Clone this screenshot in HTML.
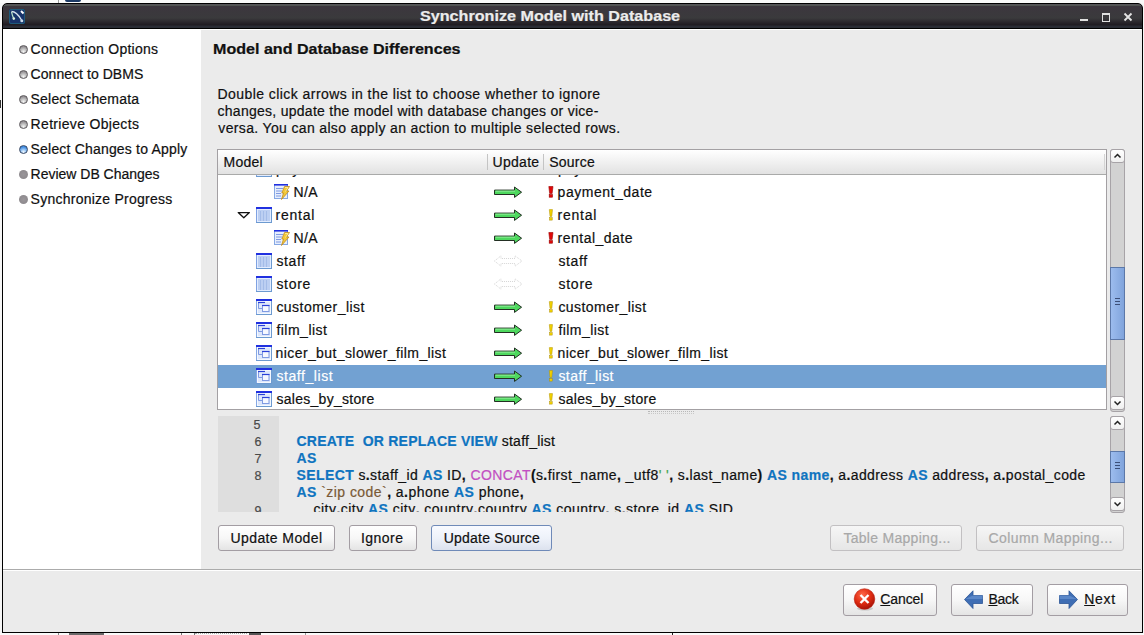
<!DOCTYPE html>
<html><head><meta charset="utf-8"><title>Synchronize Model with Database</title>
<style>
html,body{margin:0;padding:0;}
body{width:1144px;height:635px;position:relative;overflow:hidden;background:#f6f6f6;font-family:'Liberation Sans', sans-serif;}
.abs{position:absolute;}
.t{position:absolute;white-space:pre;-webkit-text-stroke:0.2px currentColor}
#bgtop{position:absolute;left:0;top:0;width:1144px;height:3px;background:#fafafa}
#win{position:absolute;left:2px;top:20px;width:1139px;height:612px;border:1px solid #000;border-top:0;background:#ececec}
#title{position:absolute;box-sizing:border-box;left:2px;top:3px;width:1141px;height:26px;border:1px solid #000;border-radius:5px 5px 0 0;background:linear-gradient(#58525c 0px,#4e564e 2px,#3c363e 2px,#3a3a3c 14px,#2f2c31 17px,#1f1b21 21px,#2a2c34 22px,#2a2c34 24px)}
#leftp{position:absolute;left:3px;top:29px;width:198px;height:540px;background:#fff}
#rightp{position:absolute;left:201px;top:29px;width:940px;height:540px;background:#ebebeb;border-top:1px solid #fff;box-sizing:border-box}
#sep{position:absolute;left:3px;top:569px;width:1138px;height:1px;background:#ababab;border-bottom:1px solid #fff}
#bottomp{position:absolute;left:3px;top:571px;width:1139px;height:61px;background:#ebebeb}
.bul{position:absolute;box-sizing:border-box;width:9px;height:9px;border-radius:50%;border:1px solid #5e5a5e;background:radial-gradient(circle at 50% 80%,#f4f4f4 0%,#c8c8c8 35%,#8e8a8e 80%)}
.bul.flat{border:0;background:radial-gradient(circle at 50% 50%,#9a969a 0%,#8e8a8e 70%,#9c9c9c 100%)}
.bul.blue{border-color:#3a4a66;background:radial-gradient(circle at 50% 85%,#f4faff 0%,#a8d0f8 30%,#3a88e0 75%)}
#list{position:absolute;left:217px;top:149px;width:888px;height:259px;border:1px solid #a3a0a3;background:#fff}
#lhead{position:absolute;left:218px;top:150px;width:888px;height:24px;border-bottom:1px solid #a9aaa9;background:linear-gradient(#ffffff,#e2e2e2)}
.bang{font-weight:bold;font-size:15px;line-height:16px}
.sbtrough{position:absolute;width:13px;border:1px solid #a7a3a7;border-radius:3px;background:#d2d2d2}
.sbbtn{position:absolute;width:13px;height:12px;border:1px solid #a7a3a7;border-radius:3px;background:linear-gradient(#ffffff,#f0f0f0);}
.sbbtn svg{position:absolute;left:-1px;top:-1px}
.sbslider{position:absolute;width:13px;border:1px solid #5c78a8;background:linear-gradient(90deg,#9cbcee,#80a4dc)}
.btn{position:absolute;box-sizing:border-box;border:1px solid #a39da3;border-radius:3px;background:linear-gradient(#ffffff 0%,#f7f7f7 50%,#e4e4e4 100%)}
.btn.focus{border-color:#6f8ab8;background:linear-gradient(#f8faff 0%,#eef2fa 50%,#dce2ee 100%)}
.btn.dis{border-color:#c2c0c2;background:linear-gradient(#f6f6f6,#e6e6e6)}
</style></head>
<body>
<div id="bgtop"></div>
<div class="abs" style="left:58px;top:0;width:1px;height:3px;background:#9a9a9a"></div>
<div class="abs" style="left:65px;top:0;width:16px;height:2px;background:#1d3a66;border-radius:0 0 4px 4px"></div>
<div class="abs" style="left:0;top:633px;width:1144px;height:2px;background:#fafafa"></div>
<div class="abs" style="left:58px;top:633px;width:1px;height:2px;background:#888"></div>
<div class="abs" style="left:181px;top:633px;width:1px;height:2px;background:#777"></div>
<div class="abs" style="left:194px;top:633px;width:1px;height:2px;background:#777"></div>
<div class="abs" style="left:305px;top:633px;width:1px;height:2px;background:#999"></div>
<div class="abs" style="left:672px;top:633px;width:1px;height:2px;background:#222"></div>
<div class="abs" style="left:69px;top:633px;width:35px;height:2px;background:#6a6a6a"></div>
<div class="abs" style="left:249px;top:633px;width:12px;height:2px;background:#555"></div>
<div class="abs" style="left:195px;top:633px;width:52px;height:1px;border-top:1px dotted #aaa"></div>
<div id="win"></div>
<div id="title"></div>
<div id="leftp"></div>
<div id="rightp"></div>
<div id="sep"></div>
<div id="bottomp"></div>
<svg class="abs" style="left:9px;top:9px" width="16" height="15" viewBox="0 0 16 15">
<rect x="0" y="0" width="16" height="15" rx="1.5" fill="#18336a"/>
<rect x="0.5" y="0.5" width="15" height="14" rx="1.5" fill="none" stroke="#1f5a7a" stroke-width="1"/>
<path d="M2.5 2.5 C6 2.5, 9 5, 12.5 11" stroke="#d8e0ee" stroke-width="1.3" fill="none"/>
<path d="M2.5 2.8 C3 5, 3.5 7, 4.5 9" stroke="#b8e0c8" stroke-width="1.2" fill="none"/>
<circle cx="4.8" cy="9.6" r="1.3" fill="#e0f0e0"/>
<circle cx="12.8" cy="11.8" r="1.5" fill="#c8d8e8"/>
<path d="M12 2 L14.5 4.5" stroke="#ffffff" stroke-width="2"/>
</svg>
<div class="abs" style="left:1080px;top:19px;width:8px;height:2px;background:#e0e0e0"></div>
<div class="abs" style="left:1102px;top:13px;width:6px;height:6px;border:1px solid #e0e0e0;border-top-width:2px"></div>
<svg class="abs" style="left:1123px;top:12px" width="10" height="10" viewBox="0 0 10 10"><path d="M1.5 1.5 L8.5 8.5 M8.5 1.5 L1.5 8.5" stroke="#e4e4e4" stroke-width="1.8"/></svg>
<div class="bul" style="left:19px;top:45px"></div>
<div class="bul" style="left:19px;top:70px"></div>
<div class="bul" style="left:19px;top:95px"></div>
<div class="bul" style="left:19px;top:120px"></div>
<div class="bul blue" style="left:19px;top:145px"></div>
<div class="bul flat" style="left:19px;top:170px"></div>
<div class="bul flat" style="left:19px;top:195px"></div>
<div id="list"></div>
<div id="lhead"></div>
<div class="abs" style="left:487px;top:154px;width:1px;height:16px;background:#c4c4c4"></div>
<div class="abs" style="left:543px;top:154px;width:1px;height:16px;background:#c4c4c4"></div>
<div class="abs" style="left:1104px;top:154px;width:1px;height:16px;background:#d4d4d4"></div>
<div class="abs" style="left:0;top:100px;width:1px;height:8px;background:#333"></div>
<div class="abs" style="left:218px;top:175px;width:888px;height:234px;overflow:hidden">
<div class="abs" style="left:0;top:190px;width:888px;height:23px;background:#72a1d2"></div>
<svg class="abs" style="left:38px;top:-14px" width="16" height="16" viewBox="0 0 16 16">
<rect x="0.5" y="0.5" width="15" height="15" fill="#bccff2" stroke="#7fa2e2"/>
<rect x="1.5" y="2.5" width="13" height="12" fill="none" stroke="#e2ecff" stroke-width="1"/>
<path d="M4.5 4 V14 M7.5 4 V14 M10.5 4 V14" stroke="#a4bce8" stroke-width="1"/>
<rect x="0" y="0" width="16" height="2" fill="#2030e0"/>
<path d="M15.5 2 V16 M0 15.5 H16" stroke="#6c9ad0" stroke-width="1"/>
</svg>
<svg class="abs" style="left:276px;top:-12px" width="29" height="12" viewBox="0 0 29 12">
<path d="M0.5 4.1 H20.5 V1 L27.6 6.2 L20.5 11.4 V8.5 H0.5 Z" fill="#4ed85e" stroke="#232f23" stroke-width="1" stroke-linejoin="round"/>
<path d="M1.5 5.1 H21" stroke="#9cf0a4" stroke-width="0.9"/>
</svg>
<svg class="abs" style="left:330px;top:-12.2px" width="6" height="12" viewBox="0 0 6 12">
<path d="M1.3 0.6 H4.5 L3.8 7.4 H2 Z" fill="#f2d200" stroke="#b09000" stroke-width="0.5"/>
<rect x="1.6" y="8.7" width="2.6" height="2.4" fill="#f2d200" stroke="#b09000" stroke-width="0.5"/>
</svg>
<svg class="abs" style="left:56px;top:9px" width="16" height="16" viewBox="0 0 16 16">
<rect x="0.5" y="0.5" width="13" height="14" fill="#e6eefc" stroke="#86a8e4"/>
<rect x="0" y="0" width="14" height="1.6" fill="#2030e0"/>
<path d="M2 4.5 H9 M2 7 H8 M2 9.5 H7 M2 12 H7" stroke="#7f9ae2" stroke-width="1.2"/>
<path d="M10.5 2.5 L15.5 2.5 L12.5 7 L15 7 L7.5 15.5 L9.5 9 L7.8 9 Z" fill="#f2c838" stroke="#c08a20" stroke-width="0.8" stroke-linejoin="round"/>
<path d="M11 3.5 L14 3.5 L11.5 7.5" stroke="#fff2a0" stroke-width="0.8" fill="none"/>
</svg>
<svg class="abs" style="left:276px;top:11px" width="29" height="12" viewBox="0 0 29 12">
<path d="M0.5 4.1 H20.5 V1 L27.6 6.2 L20.5 11.4 V8.5 H0.5 Z" fill="#4ed85e" stroke="#232f23" stroke-width="1" stroke-linejoin="round"/>
<path d="M1.5 5.1 H21" stroke="#9cf0a4" stroke-width="0.9"/>
</svg>
<svg class="abs" style="left:330px;top:10.8px" width="6" height="12" viewBox="0 0 6 12">
<path d="M0.8 0.5 H5 L4.1 7.6 H1.7 Z" fill="#e00808" stroke="#900" stroke-width="0.6"/>
<rect x="1.2" y="8.6" width="3.3" height="2.6" fill="#e00808" stroke="#900" stroke-width="0.6"/>
</svg>
<svg class="abs" style="left:38px;top:32px" width="16" height="16" viewBox="0 0 16 16">
<rect x="0.5" y="0.5" width="15" height="15" fill="#bccff2" stroke="#7fa2e2"/>
<rect x="1.5" y="2.5" width="13" height="12" fill="none" stroke="#e2ecff" stroke-width="1"/>
<path d="M4.5 4 V14 M7.5 4 V14 M10.5 4 V14" stroke="#a4bce8" stroke-width="1"/>
<rect x="0" y="0" width="16" height="2" fill="#2030e0"/>
<path d="M15.5 2 V16 M0 15.5 H16" stroke="#6c9ad0" stroke-width="1"/>
</svg>
<svg class="abs" style="left:276px;top:34px" width="29" height="12" viewBox="0 0 29 12">
<path d="M0.5 4.1 H20.5 V1 L27.6 6.2 L20.5 11.4 V8.5 H0.5 Z" fill="#4ed85e" stroke="#232f23" stroke-width="1" stroke-linejoin="round"/>
<path d="M1.5 5.1 H21" stroke="#9cf0a4" stroke-width="0.9"/>
</svg>
<svg class="abs" style="left:330px;top:33.8px" width="6" height="12" viewBox="0 0 6 12">
<path d="M1.3 0.6 H4.5 L3.8 7.4 H2 Z" fill="#f2d200" stroke="#b09000" stroke-width="0.5"/>
<rect x="1.6" y="8.7" width="2.6" height="2.4" fill="#f2d200" stroke="#b09000" stroke-width="0.5"/>
</svg>
<svg class="abs" style="left:56px;top:55px" width="16" height="16" viewBox="0 0 16 16">
<rect x="0.5" y="0.5" width="13" height="14" fill="#e6eefc" stroke="#86a8e4"/>
<rect x="0" y="0" width="14" height="1.6" fill="#2030e0"/>
<path d="M2 4.5 H9 M2 7 H8 M2 9.5 H7 M2 12 H7" stroke="#7f9ae2" stroke-width="1.2"/>
<path d="M10.5 2.5 L15.5 2.5 L12.5 7 L15 7 L7.5 15.5 L9.5 9 L7.8 9 Z" fill="#f2c838" stroke="#c08a20" stroke-width="0.8" stroke-linejoin="round"/>
<path d="M11 3.5 L14 3.5 L11.5 7.5" stroke="#fff2a0" stroke-width="0.8" fill="none"/>
</svg>
<svg class="abs" style="left:276px;top:57px" width="29" height="12" viewBox="0 0 29 12">
<path d="M0.5 4.1 H20.5 V1 L27.6 6.2 L20.5 11.4 V8.5 H0.5 Z" fill="#4ed85e" stroke="#232f23" stroke-width="1" stroke-linejoin="round"/>
<path d="M1.5 5.1 H21" stroke="#9cf0a4" stroke-width="0.9"/>
</svg>
<svg class="abs" style="left:330px;top:56.8px" width="6" height="12" viewBox="0 0 6 12">
<path d="M0.8 0.5 H5 L4.1 7.6 H1.7 Z" fill="#e00808" stroke="#900" stroke-width="0.6"/>
<rect x="1.2" y="8.6" width="3.3" height="2.6" fill="#e00808" stroke="#900" stroke-width="0.6"/>
</svg>
<svg class="abs" style="left:38px;top:78px" width="16" height="16" viewBox="0 0 16 16">
<rect x="0.5" y="0.5" width="15" height="15" fill="#bccff2" stroke="#7fa2e2"/>
<rect x="1.5" y="2.5" width="13" height="12" fill="none" stroke="#e2ecff" stroke-width="1"/>
<path d="M4.5 4 V14 M7.5 4 V14 M10.5 4 V14" stroke="#a4bce8" stroke-width="1"/>
<rect x="0" y="0" width="16" height="2" fill="#2030e0"/>
<path d="M15.5 2 V16 M0 15.5 H16" stroke="#6c9ad0" stroke-width="1"/>
</svg>
<svg class="abs" style="left:276px;top:80px" width="29" height="12" viewBox="0 0 29 12">
<path d="M0.5 6 L7 0.8 V3.5 H21 V0.8 L28 6 L21 11.2 V8.5 H7 V11.2 Z" fill="none" stroke="#d6d6d6" stroke-width="1" stroke-dasharray="1 1"/>
</svg>
<svg class="abs" style="left:38px;top:101px" width="16" height="16" viewBox="0 0 16 16">
<rect x="0.5" y="0.5" width="15" height="15" fill="#bccff2" stroke="#7fa2e2"/>
<rect x="1.5" y="2.5" width="13" height="12" fill="none" stroke="#e2ecff" stroke-width="1"/>
<path d="M4.5 4 V14 M7.5 4 V14 M10.5 4 V14" stroke="#a4bce8" stroke-width="1"/>
<rect x="0" y="0" width="16" height="2" fill="#2030e0"/>
<path d="M15.5 2 V16 M0 15.5 H16" stroke="#6c9ad0" stroke-width="1"/>
</svg>
<svg class="abs" style="left:276px;top:103px" width="29" height="12" viewBox="0 0 29 12">
<path d="M0.5 6 L7 0.8 V3.5 H21 V0.8 L28 6 L21 11.2 V8.5 H7 V11.2 Z" fill="none" stroke="#d6d6d6" stroke-width="1" stroke-dasharray="1 1"/>
</svg>
<svg class="abs" style="left:38px;top:124px" width="16" height="16" viewBox="0 0 16 16">
<rect x="0.5" y="0.5" width="15" height="15" fill="#dde7fb" stroke="#86a8e4"/>
<rect x="1.5" y="2.5" width="13" height="12" fill="none" stroke="#f4f8ff" stroke-width="1"/>
<rect x="0" y="0" width="16" height="2" fill="#2030e0"/>
<path d="M2.5 3.5 V9.5 H6" stroke="#7f9ae2" stroke-width="1" fill="none"/>
<path d="M2 3.5 H9" stroke="#2a40d8" stroke-width="1.2"/>
<rect x="6.5" y="6.5" width="6.5" height="6" fill="#f6f8ff" stroke="#7f9ae2" stroke-width="1"/>
<path d="M6 6.5 H13.5" stroke="#2a40d8" stroke-width="1.2"/>
<path d="M15.5 2 V16 M0 15.5 H16" stroke="#6c9ad0" stroke-width="1"/>
</svg>
<svg class="abs" style="left:276px;top:126px" width="29" height="12" viewBox="0 0 29 12">
<path d="M0.5 4.1 H20.5 V1 L27.6 6.2 L20.5 11.4 V8.5 H0.5 Z" fill="#4ed85e" stroke="#232f23" stroke-width="1" stroke-linejoin="round"/>
<path d="M1.5 5.1 H21" stroke="#9cf0a4" stroke-width="0.9"/>
</svg>
<svg class="abs" style="left:330px;top:125.8px" width="6" height="12" viewBox="0 0 6 12">
<path d="M1.3 0.6 H4.5 L3.8 7.4 H2 Z" fill="#f2d200" stroke="#b09000" stroke-width="0.5"/>
<rect x="1.6" y="8.7" width="2.6" height="2.4" fill="#f2d200" stroke="#b09000" stroke-width="0.5"/>
</svg>
<svg class="abs" style="left:38px;top:147px" width="16" height="16" viewBox="0 0 16 16">
<rect x="0.5" y="0.5" width="15" height="15" fill="#dde7fb" stroke="#86a8e4"/>
<rect x="1.5" y="2.5" width="13" height="12" fill="none" stroke="#f4f8ff" stroke-width="1"/>
<rect x="0" y="0" width="16" height="2" fill="#2030e0"/>
<path d="M2.5 3.5 V9.5 H6" stroke="#7f9ae2" stroke-width="1" fill="none"/>
<path d="M2 3.5 H9" stroke="#2a40d8" stroke-width="1.2"/>
<rect x="6.5" y="6.5" width="6.5" height="6" fill="#f6f8ff" stroke="#7f9ae2" stroke-width="1"/>
<path d="M6 6.5 H13.5" stroke="#2a40d8" stroke-width="1.2"/>
<path d="M15.5 2 V16 M0 15.5 H16" stroke="#6c9ad0" stroke-width="1"/>
</svg>
<svg class="abs" style="left:276px;top:149px" width="29" height="12" viewBox="0 0 29 12">
<path d="M0.5 4.1 H20.5 V1 L27.6 6.2 L20.5 11.4 V8.5 H0.5 Z" fill="#4ed85e" stroke="#232f23" stroke-width="1" stroke-linejoin="round"/>
<path d="M1.5 5.1 H21" stroke="#9cf0a4" stroke-width="0.9"/>
</svg>
<svg class="abs" style="left:330px;top:148.8px" width="6" height="12" viewBox="0 0 6 12">
<path d="M1.3 0.6 H4.5 L3.8 7.4 H2 Z" fill="#f2d200" stroke="#b09000" stroke-width="0.5"/>
<rect x="1.6" y="8.7" width="2.6" height="2.4" fill="#f2d200" stroke="#b09000" stroke-width="0.5"/>
</svg>
<svg class="abs" style="left:38px;top:170px" width="16" height="16" viewBox="0 0 16 16">
<rect x="0.5" y="0.5" width="15" height="15" fill="#dde7fb" stroke="#86a8e4"/>
<rect x="1.5" y="2.5" width="13" height="12" fill="none" stroke="#f4f8ff" stroke-width="1"/>
<rect x="0" y="0" width="16" height="2" fill="#2030e0"/>
<path d="M2.5 3.5 V9.5 H6" stroke="#7f9ae2" stroke-width="1" fill="none"/>
<path d="M2 3.5 H9" stroke="#2a40d8" stroke-width="1.2"/>
<rect x="6.5" y="6.5" width="6.5" height="6" fill="#f6f8ff" stroke="#7f9ae2" stroke-width="1"/>
<path d="M6 6.5 H13.5" stroke="#2a40d8" stroke-width="1.2"/>
<path d="M15.5 2 V16 M0 15.5 H16" stroke="#6c9ad0" stroke-width="1"/>
</svg>
<svg class="abs" style="left:276px;top:172px" width="29" height="12" viewBox="0 0 29 12">
<path d="M0.5 4.1 H20.5 V1 L27.6 6.2 L20.5 11.4 V8.5 H0.5 Z" fill="#4ed85e" stroke="#232f23" stroke-width="1" stroke-linejoin="round"/>
<path d="M1.5 5.1 H21" stroke="#9cf0a4" stroke-width="0.9"/>
</svg>
<svg class="abs" style="left:330px;top:171.8px" width="6" height="12" viewBox="0 0 6 12">
<path d="M1.3 0.6 H4.5 L3.8 7.4 H2 Z" fill="#f2d200" stroke="#b09000" stroke-width="0.5"/>
<rect x="1.6" y="8.7" width="2.6" height="2.4" fill="#f2d200" stroke="#b09000" stroke-width="0.5"/>
</svg>
<svg class="abs" style="left:38px;top:193px" width="16" height="16" viewBox="0 0 16 16">
<rect x="0.5" y="0.5" width="15" height="15" fill="#dde7fb" stroke="#86a8e4"/>
<rect x="1.5" y="2.5" width="13" height="12" fill="none" stroke="#f4f8ff" stroke-width="1"/>
<rect x="0" y="0" width="16" height="2" fill="#2030e0"/>
<path d="M2.5 3.5 V9.5 H6" stroke="#7f9ae2" stroke-width="1" fill="none"/>
<path d="M2 3.5 H9" stroke="#2a40d8" stroke-width="1.2"/>
<rect x="6.5" y="6.5" width="6.5" height="6" fill="#f6f8ff" stroke="#7f9ae2" stroke-width="1"/>
<path d="M6 6.5 H13.5" stroke="#2a40d8" stroke-width="1.2"/>
<path d="M15.5 2 V16 M0 15.5 H16" stroke="#6c9ad0" stroke-width="1"/>
</svg>
<svg class="abs" style="left:276px;top:195px" width="29" height="12" viewBox="0 0 29 12">
<path d="M0.5 4.1 H20.5 V1 L27.6 6.2 L20.5 11.4 V8.5 H0.5 Z" fill="#4ed85e" stroke="#232f23" stroke-width="1" stroke-linejoin="round"/>
<path d="M1.5 5.1 H21" stroke="#9cf0a4" stroke-width="0.9"/>
</svg>
<svg class="abs" style="left:330px;top:194.8px" width="6" height="12" viewBox="0 0 6 12">
<path d="M1.3 0.6 H4.5 L3.8 7.4 H2 Z" fill="#f2d200" stroke="#b09000" stroke-width="0.5"/>
<rect x="1.6" y="8.7" width="2.6" height="2.4" fill="#f2d200" stroke="#b09000" stroke-width="0.5"/>
</svg>
<svg class="abs" style="left:38px;top:216px" width="16" height="16" viewBox="0 0 16 16">
<rect x="0.5" y="0.5" width="15" height="15" fill="#dde7fb" stroke="#86a8e4"/>
<rect x="1.5" y="2.5" width="13" height="12" fill="none" stroke="#f4f8ff" stroke-width="1"/>
<rect x="0" y="0" width="16" height="2" fill="#2030e0"/>
<path d="M2.5 3.5 V9.5 H6" stroke="#7f9ae2" stroke-width="1" fill="none"/>
<path d="M2 3.5 H9" stroke="#2a40d8" stroke-width="1.2"/>
<rect x="6.5" y="6.5" width="6.5" height="6" fill="#f6f8ff" stroke="#7f9ae2" stroke-width="1"/>
<path d="M6 6.5 H13.5" stroke="#2a40d8" stroke-width="1.2"/>
<path d="M15.5 2 V16 M0 15.5 H16" stroke="#6c9ad0" stroke-width="1"/>
</svg>
<svg class="abs" style="left:276px;top:218px" width="29" height="12" viewBox="0 0 29 12">
<path d="M0.5 4.1 H20.5 V1 L27.6 6.2 L20.5 11.4 V8.5 H0.5 Z" fill="#4ed85e" stroke="#232f23" stroke-width="1" stroke-linejoin="round"/>
<path d="M1.5 5.1 H21" stroke="#9cf0a4" stroke-width="0.9"/>
</svg>
<svg class="abs" style="left:330px;top:217.8px" width="6" height="12" viewBox="0 0 6 12">
<path d="M1.3 0.6 H4.5 L3.8 7.4 H2 Z" fill="#f2d200" stroke="#b09000" stroke-width="0.5"/>
<rect x="1.6" y="8.7" width="2.6" height="2.4" fill="#f2d200" stroke="#b09000" stroke-width="0.5"/>
</svg>
<svg class="abs" style="left:19px;top:36px" width="13" height="8" viewBox="0 0 13 8"><path d="M1.2 1.6 H12.4 L6.8 6.8 Z" fill="#fff" stroke="#111" stroke-width="1.3" stroke-linejoin="round"/></svg>
<div class="t" style="left:58.00px;top:-14.00px;font-size:14px;line-height:16px;font-weight:normal;color:#101010;letter-spacing:0.4px;">payment</div>
<div class="t" style="left:340.00px;top:-14.00px;font-size:14px;line-height:16px;font-weight:normal;color:#101010;letter-spacing:0.4px;">payment</div>
<div class="t" style="left:75.38px;top:9.00px;font-size:14px;line-height:16px;font-weight:normal;color:#101010;letter-spacing:0.44999999999998297px;">N/A</div>
<div class="t" style="left:339.60px;top:9.00px;font-size:14px;line-height:16px;font-weight:normal;color:#101010;letter-spacing:0.5272727272727149px;">payment_date</div>
<div class="t" style="left:57.60px;top:32.00px;font-size:14px;line-height:16px;font-weight:normal;color:#101010;letter-spacing:0.7399999999999863px;">rental</div>
<div class="t" style="left:339.60px;top:32.00px;font-size:14px;line-height:16px;font-weight:normal;color:#101010;letter-spacing:0.7399999999999863px;">rental</div>
<div class="t" style="left:75.38px;top:55.00px;font-size:14px;line-height:16px;font-weight:normal;color:#101010;letter-spacing:0.44999999999998297px;">N/A</div>
<div class="t" style="left:339.60px;top:55.00px;font-size:14px;line-height:16px;font-weight:normal;color:#101010;letter-spacing:0.48000000000000687px;">rental_date</div>
<div class="t" style="left:58.40px;top:78.00px;font-size:14px;line-height:16px;font-weight:normal;color:#101010;letter-spacing:0.65px;">staff</div>
<div class="t" style="left:340.40px;top:78.00px;font-size:14px;line-height:16px;font-weight:normal;color:#101010;letter-spacing:0.65px;">staff</div>
<div class="t" style="left:58.40px;top:101.00px;font-size:14px;line-height:16px;font-weight:normal;color:#101010;letter-spacing:0.699999999999983px;">store</div>
<div class="t" style="left:340.40px;top:101.00px;font-size:14px;line-height:16px;font-weight:normal;color:#101010;letter-spacing:0.775px;">store</div>
<div class="t" style="left:58.40px;top:124.00px;font-size:14px;line-height:16px;font-weight:normal;color:#101010;letter-spacing:0.46666666666667234px;">customer_list</div>
<div class="t" style="left:340.40px;top:124.00px;font-size:14px;line-height:16px;font-weight:normal;color:#101010;letter-spacing:0.4416666666666667px;">customer_list</div>
<div class="t" style="left:58.40px;top:147.00px;font-size:14px;line-height:16px;font-weight:normal;color:#101010;letter-spacing:0.4874999999999915px;">film_list</div>
<div class="t" style="left:340.40px;top:147.00px;font-size:14px;line-height:16px;font-weight:normal;color:#101010;letter-spacing:0.44999999999998297px;">film_list</div>
<div class="t" style="left:57.60px;top:170.00px;font-size:14px;line-height:16px;font-weight:normal;color:#101010;letter-spacing:0.4px;">nicer_but_slower_film_list</div>
<div class="t" style="left:339.60px;top:170.00px;font-size:14px;line-height:16px;font-weight:normal;color:#101010;letter-spacing:0.3920000000000028px;">nicer_but_slower_film_list</div>
<div class="t" style="left:58.40px;top:193.00px;font-size:14px;line-height:16px;font-weight:normal;color:#ffffff;letter-spacing:0.5777777777777741px;">staff_list</div>
<div class="t" style="left:340.40px;top:193.00px;font-size:14px;line-height:16px;font-weight:normal;color:#ffffff;letter-spacing:0.4444444444444294px;">staff_list</div>
<div class="t" style="left:58.40px;top:216.00px;font-size:14px;line-height:16px;font-weight:normal;color:#101010;letter-spacing:0.2846153846153846px;">sales_by_store</div>
<div class="t" style="left:340.40px;top:216.00px;font-size:14px;line-height:16px;font-weight:normal;color:#101010;letter-spacing:0.2923076923077028px;">sales_by_store</div>
</div>
<div class="sbtrough" style="left:1110px;top:149px;height:261px"></div><div class="sbbtn" style="left:1110px;top:149px"><svg width="15" height="14" viewBox="0 0 15 14"><path d="M4.5 8.5 L7.5 5.5 L10.5 8.5" fill="none" stroke="#222" stroke-width="1.5"/></svg></div><div class="sbbtn" style="left:1110px;top:396px"><svg width="15" height="14" viewBox="0 0 15 14"><path d="M4.5 5.5 L7.5 8.5 L10.5 5.5" fill="none" stroke="#222" stroke-width="1.5"/></svg></div><div class="sbslider" style="left:1110px;top:267px;height:71px"></div><div class="abs" style="left:1115px;top:298px;width:5px;height:1px;background:#3c4f78"></div><div class="abs" style="left:1115px;top:301px;width:5px;height:1px;background:#3c4f78"></div><div class="abs" style="left:1115px;top:304px;width:5px;height:1px;background:#3c4f78"></div>
<div class="abs" style="left:648px;top:411px;width:46px;height:1px;border-top:1px dotted #b8b8b8;border-bottom:1px dotted #c8c8c8"></div>
<div class="abs" style="left:218px;top:416px;width:61px;height:96px;background:#dedede"></div>
<div class="abs" style="left:218px;top:416px;width:888px;height:96px;overflow:hidden">
<div class="t" style="left:35.60px;top:2.00px;font-size:12.5px;line-height:14px;font-weight:normal;color:#4a4a4a;letter-spacing:0.3px;">5</div>
<div class="t" style="left:36.40px;top:19.00px;font-size:12.5px;line-height:14px;font-weight:normal;color:#4a4a4a;letter-spacing:0.3px;">6</div>
<div class="t" style="left:36.40px;top:36.00px;font-size:12.5px;line-height:14px;font-weight:normal;color:#4a4a4a;letter-spacing:0.3px;">7</div>
<div class="t" style="left:36.40px;top:53.00px;font-size:12.5px;line-height:14px;font-weight:normal;color:#4a4a4a;letter-spacing:0.3px;">8</div>
<div class="t" style="left:36.40px;top:88.00px;font-size:12.5px;line-height:14px;font-weight:normal;color:#4a4a4a;letter-spacing:0.3px;">9</div>
<div class="t" style="left:78.50px;top:17.00px;font-size:14px;line-height:16px;font-weight:normal;color:#101010;letter-spacing:0.23384848484848486px;"><span style="color:#0f74c0;font-weight:bold">CREATE </span> <span style="color:#0f74c0;font-weight:bold">OR REPLACE VIEW</span> staff_list</div>
<div class="t" style="left:78.50px;top:34.00px;font-size:14px;line-height:16px;font-weight:normal;color:#101010;letter-spacing:0.3px;"><span style="color:#0f74c0;font-weight:bold">AS</span></div>
<div class="t" style="left:78.50px;top:51.00px;font-size:14px;line-height:16px;font-weight:normal;color:#101010;letter-spacing:0.3982142857142833px;"><span style="color:#0f74c0;font-weight:bold">SELECT</span> s<span style="font-weight:bold">.</span>staff_id <span style="color:#0f74c0;font-weight:bold">AS</span> ID<span style="font-weight:bold">,</span> <span style="color:#c24fc2">CONCAT</span><span style="font-weight:bold">(</span>s<span style="font-weight:bold">.</span>first_name<span style="font-weight:bold">,</span> _utf8<span style="color:#3fa34d">&#x27; &#x27;</span><span style="font-weight:bold">,</span> s<span style="font-weight:bold">.</span>last_name<span style="font-weight:bold">)</span> <span style="color:#0f74c0;font-weight:bold">AS name</span><span style="font-weight:bold">,</span> a<span style="font-weight:bold">.</span>address <span style="color:#0f74c0;font-weight:bold">AS</span> address<span style="font-weight:bold">,</span> a<span style="font-weight:bold">.</span>postal_code</div>
<div class="t" style="left:78.50px;top:68.00px;font-size:14px;line-height:16px;font-weight:normal;color:#101010;letter-spacing:0.4485806451612881px;"><span style="color:#0f74c0;font-weight:bold">AS</span> <span style="color:#7a5a36">`zip code`</span><span style="font-weight:bold">,</span> a<span style="font-weight:bold">.</span>phone <span style="color:#0f74c0;font-weight:bold">AS</span> phone<span style="font-weight:bold">,</span></div>
<div class="t" style="left:95.50px;top:85.00px;font-size:14px;line-height:16px;font-weight:normal;color:#101010;letter-spacing:0.46934920634920424px;">city<span style="font-weight:bold">.</span>city <span style="color:#0f74c0;font-weight:bold">AS</span> city<span style="font-weight:bold">,</span> country<span style="font-weight:bold">.</span>country <span style="color:#0f74c0;font-weight:bold">AS</span> country<span style="font-weight:bold">,</span> s<span style="font-weight:bold">.</span>store_id <span style="color:#0f74c0;font-weight:bold">AS</span> SID</div>
</div>
<div class="sbtrough" style="left:1110px;top:416px;height:95px"></div><div class="sbbtn" style="left:1110px;top:416px"><svg width="15" height="14" viewBox="0 0 15 14"><path d="M4.5 8.5 L7.5 5.5 L10.5 8.5" fill="none" stroke="#222" stroke-width="1.5"/></svg></div><div class="sbbtn" style="left:1110px;top:497px"><svg width="15" height="14" viewBox="0 0 15 14"><path d="M4.5 5.5 L7.5 8.5 L10.5 5.5" fill="none" stroke="#222" stroke-width="1.5"/></svg></div><div class="sbslider" style="left:1110px;top:451px;height:30px"></div><div class="abs" style="left:1115px;top:462px;width:5px;height:1px;background:#3c4f78"></div><div class="abs" style="left:1115px;top:465px;width:5px;height:1px;background:#3c4f78"></div><div class="abs" style="left:1115px;top:468px;width:5px;height:1px;background:#3c4f78"></div>
<div class="btn" style="left:218px;top:525px;width:117px;height:26px"></div>
<div class="btn" style="left:349px;top:525px;width:68px;height:26px"></div>
<div class="btn focus" style="left:431px;top:525px;width:121px;height:26px"></div>
<div class="btn dis" style="left:830px;top:525px;width:132px;height:26px"></div>
<div class="btn dis" style="left:976px;top:525px;width:148px;height:26px"></div>
<div class="btn" style="left:843px;top:584px;width:94px;height:32px"></div>
<div class="btn" style="left:951px;top:584px;width:82px;height:32px"></div>
<div class="btn" style="left:1047px;top:584px;width:81px;height:32px"></div>
<svg class="abs" style="left:853px;top:588px" width="24" height="24" viewBox="0 0 24 24">
<defs><radialGradient id="rg" cx="0.4" cy="0.3" r="0.7"><stop offset="0" stop-color="#ff6a4a"/><stop offset="0.6" stop-color="#de2a10"/><stop offset="1" stop-color="#a81408"/></radialGradient></defs>
<ellipse cx="12" cy="20.5" rx="8" ry="2" fill="#000" opacity="0.15"/>
<circle cx="11.5" cy="11" r="10.3" fill="url(#rg)" stroke="#b81a0a" stroke-width="0.6"/>
<path d="M7.5 7 L15.5 15 M15.5 7 L7.5 15" stroke="#fff" stroke-width="2.4"/>
</svg>
<svg class="abs" style="left:963px;top:589px" width="21" height="21" viewBox="0 0 21 21">
<path d="M1.5 10.5 L10 1.8 V6.5 H19.5 V14.5 H10 V19.5 Z" fill="#3f6eb4" stroke="#2c5597" stroke-width="0.8"/>
<path d="M10 6.5 H19.5 V10 H2 Z" fill="#6d98d6" opacity="0.6"/>
</svg>
<svg class="abs" style="left:1058px;top:589px" width="21" height="21" viewBox="0 0 21 21">
<path d="M19.5 10.5 L11 1.8 V6.5 H1.5 V14.5 H11 V19.5 Z" fill="#3f6eb4" stroke="#2c5597" stroke-width="0.8"/>
<path d="M11 6.5 H1.5 V10 H19 Z" fill="#6d98d6" opacity="0.6"/>
</svg>
<div class="t" style="left:419.50px;top:8.00px;font-size:14px;line-height:16px;font-weight:bold;color:#ececec;letter-spacing:0px;transform:scaleX(1.1529);transform-origin:0 0;">Synchronize Model with Database</div>
<div class="t" style="left:30.60px;top:41.00px;font-size:14px;line-height:16px;font-weight:normal;color:#101010;letter-spacing:0.26694117647059024px;">Connection Options</div>
<div class="t" style="left:30.60px;top:66.00px;font-size:14px;line-height:16px;font-weight:normal;color:#101010;letter-spacing:0.04285714285714164px;">Connect to DBMS</div>
<div class="t" style="left:30.60px;top:91.00px;font-size:14px;line-height:16px;font-weight:normal;color:#101010;letter-spacing:0.18571428571428453px;">Select Schemata</div>
<div class="t" style="left:30.60px;top:116.00px;font-size:14px;line-height:16px;font-weight:normal;color:#101010;letter-spacing:0.31999999999999884px;">Retrieve Objects</div>
<div class="t" style="left:30.60px;top:141.00px;font-size:14px;line-height:16px;font-weight:normal;color:#101010;letter-spacing:0.18427272727272573px;">Select Changes to Apply</div>
<div class="t" style="left:30.60px;top:166.00px;font-size:14px;line-height:16px;font-weight:normal;color:#101010;letter-spacing:-0.01250000000000212px;">Review DB Changes</div>
<div class="t" style="left:30.60px;top:191.00px;font-size:14px;line-height:16px;font-weight:normal;color:#101010;letter-spacing:0.24421052631578766px;">Synchronize Progress</div>
<div class="t" style="left:212.70px;top:41.00px;font-size:14px;line-height:16px;font-weight:bold;color:#111;letter-spacing:0px;transform:scaleX(1.1485);transform-origin:0 0;">Model and Database Differences</div>
<div class="t" style="left:217.50px;top:86.00px;font-size:14px;line-height:16px;font-weight:normal;color:#101010;letter-spacing:0.4376896551724126px;">Double click arrows in the list to choose whether to ignore</div>
<div class="t" style="left:217.50px;top:103.00px;font-size:14px;line-height:16px;font-weight:normal;color:#101010;letter-spacing:0.2729090909090934px;">changes, update the model with database changes or vice-</div>
<div class="t" style="left:218.30px;top:120.00px;font-size:14px;line-height:16px;font-weight:normal;color:#101010;letter-spacing:0.3478360655737728px;">versa. You can also apply an action to multiple selected rows.</div>
<div class="t" style="left:223.50px;top:153.50px;font-size:14px;line-height:16px;font-weight:normal;color:#101010;letter-spacing:0.215px;">Model</div>
<div class="t" style="left:492.60px;top:153.50px;font-size:14px;line-height:16px;font-weight:normal;color:#101010;letter-spacing:0.269px;">Update</div>
<div class="t" style="left:549.26px;top:153.50px;font-size:14px;line-height:16px;font-weight:normal;color:#101010;letter-spacing:0.22799999999999995px;">Source</div>
<div class="t" style="left:230.50px;top:530.00px;font-size:14px;line-height:16px;font-weight:normal;color:#101010;letter-spacing:0.40209090909090284px;">Update Model</div>
<div class="t" style="left:360.92px;top:530.00px;font-size:14px;line-height:16px;font-weight:normal;color:#101010;letter-spacing:0.4790000000000136px;">Ignore</div>
<div class="t" style="left:443.72px;top:530.00px;font-size:14px;line-height:16px;font-weight:normal;color:#101010;letter-spacing:0.22466666666667234px;">Update Source</div>
<div class="t" style="left:843.40px;top:530.00px;font-size:14px;line-height:16px;font-weight:normal;color:#a8a8a8;letter-spacing:0.2913333333333288px;">Table Mapping...</div>
<div class="t" style="left:988.50px;top:530.00px;font-size:14px;line-height:16px;font-weight:normal;color:#a8a8a8;letter-spacing:0.405px;">Column Mapping...</div>
<div class="t" style="left:880.30px;top:591.00px;font-size:14px;line-height:16px;font-weight:normal;color:#101010;letter-spacing:-0.119px;"><span style="text-decoration:underline">C</span>ancel</div>
<div class="t" style="left:988.40px;top:591.00px;font-size:14px;line-height:16px;font-weight:normal;color:#101010;letter-spacing:-0.214px;"><span style="text-decoration:underline">B</span>ack</div>
<div class="t" style="left:1084.18px;top:591.00px;font-size:14px;line-height:16px;font-weight:normal;color:#101010;letter-spacing:0.7293333333332878px;"><span style="text-decoration:underline">N</span>ext</div>
</body></html>
